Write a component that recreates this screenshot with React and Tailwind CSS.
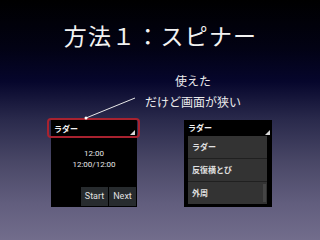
export default function App() {
  const jp = { fontFamily: '"Noto Sans CJK JP", "Noto Sans", sans-serif' };
  return (
    <div
      className="relative w-[320px] h-[240px] overflow-hidden bg-[linear-gradient(180deg,#000000_0%,#020214_20%,#06062c_34%,#2a2a4c_50%,#4a4867_68%,#625e7e_85%,#726d8c_100%)] text-white"
      style={jp}
    >
      <div className="pt-[23px] pl-[1px] text-center text-[23px] leading-[24px] text-[#f2f2f2] tracking-[1.2px]">
        方法１：スピナー
      </div>
      <div className="mt-[23px] ml-[143px] w-[100px] text-center text-[12px] leading-[21px] text-[#ececec]">
        <div>使えた</div>
        <div>だけど画面が狭い</div>
      </div>

      <div className="mt-[8px] ml-[51px] flex gap-[47px]">
        {/* left phone */}
        <div className="relative w-[86px] h-[87px] bg-black flex flex-col">
          <div className="relative h-[17px] flex items-center pl-[3px]">
            <span className="text-[8px] font-bold text-[#f0f0f0] leading-none">ラダー</span>
            <div className="absolute right-[2px] bottom-[2px] w-0 h-0 border-l-[5px] border-l-transparent border-b-[5px] border-b-[#d8d8d8]" />
          </div>
          <div className="absolute left-[-4px] top-[-2px] w-[93px] h-[20px] border-2 border-[#a8222f] rounded-[4px]" />
          <div
            className="flex-1 flex flex-col items-center justify-center text-[8px] leading-[11px] text-[#e8e8e8] pb-[6px]"
            style={{ fontFamily: 'Roboto, "Liberation Sans", sans-serif' }}
          >
            <div>12:00</div>
            <div>12:00/12:00</div>
          </div>
          <div
            className="flex justify-end gap-[1px] pr-[1px] pb-[1px]"
            style={{ fontFamily: 'Roboto, "Liberation Sans", sans-serif' }}
          >
            <div className="w-[27px] h-[19px] bg-[#272b2e] flex items-center justify-center text-[9px] text-[#e0e0e0]">Start</div>
            <div className="w-[27px] h-[19px] bg-[#272b2e] flex items-center justify-center text-[9px] text-[#e0e0e0]">Next</div>
          </div>
        </div>

        {/* right phone */}
        <div className="relative w-[88px] h-[87px] bg-black flex flex-col">
          <div className="relative h-[16px] flex items-center pl-[4px]">
            <span className="text-[8px] font-bold text-[#f0f0f0] leading-none">ラダー</span>
            <div className="absolute right-[2px] bottom-[1px] w-0 h-0 border-l-[5px] border-l-transparent border-b-[5px] border-b-[#d8d8d8]" />
          </div>
          <div className="relative ml-[4px] w-[79px] h-[68px] bg-[#202020] flex flex-col gap-[1px]">
            <div className="h-[22px] bg-[#333333] flex items-center pl-[4px] text-[8px] font-bold text-[#e0e0e0]">ラダー</div>
            <div className="h-[22px] bg-[#333333] flex items-center pl-[4px] text-[8px] font-bold text-[#e0e0e0]">反復横とび</div>
            <div className="h-[22px] bg-[#333333] flex items-center pl-[4px] text-[8px] font-bold text-[#e0e0e0]">外周</div>
            <div className="absolute right-[1px] top-[48px] w-[3px] h-[18px] bg-[#454545]" />
          </div>
        </div>
      </div>

      <svg className="absolute left-0 top-0" width="320" height="240">
        <line x1="135" y1="98" x2="86" y2="118" stroke="#e8e8e8" strokeWidth="1" />
        <circle cx="86" cy="118" r="1.5" fill="#ffffff" />
      </svg>
    </div>
  );
}
